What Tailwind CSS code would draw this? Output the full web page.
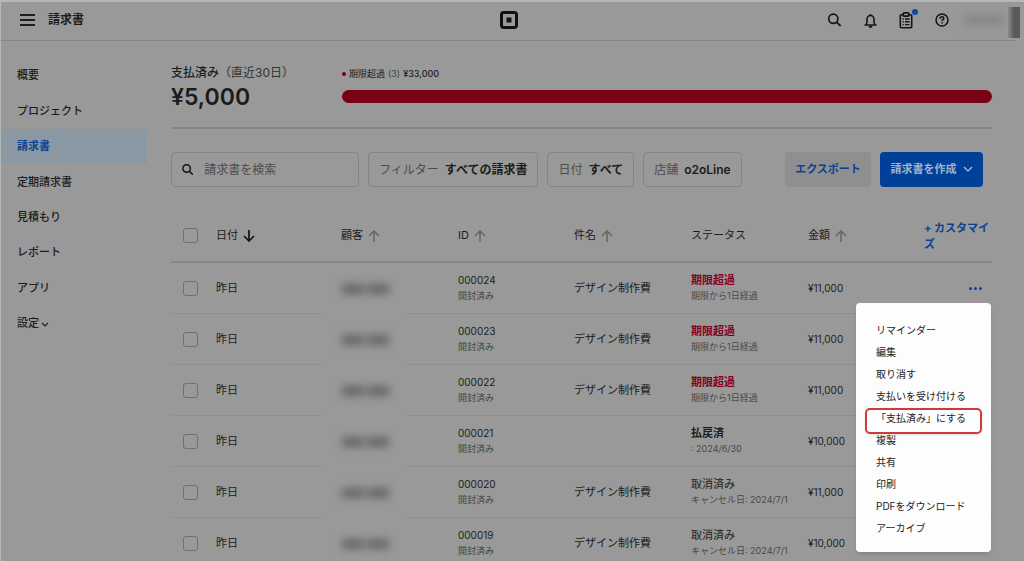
<!DOCTYPE html>
<html lang="ja">
<head>
<meta charset="utf-8">
<meta name="viewport" content="width=device-width, initial-scale=1">
<title>請求書</title>
<script src="https://cdn.jsdelivr.net/npm/@tailwindcss/browser@4"></script>
</head>
<body class="flex h-screen flex-col overflow-hidden border-t-2 border-l border-[#b4b8b7] bg-[#999999] font-['Inter','Noto_Sans_CJK_JP',sans-serif] text-[11px] text-[#1c1c1c]">

<header class="mr-2 grid h-[39px] shrink-0 grid-cols-[1fr_auto_1fr] items-center border-b border-[#858585] pb-[2px]">
  <div class="flex items-center gap-[13px] pl-[19px]">
    <button type="button" aria-label="メニュー">
      <svg class="block" width="15" height="12" viewBox="0 0 15 12" fill="none" stroke="#1f1f1f" stroke-width="1.8"><path d="M0 1h15M0 6h15M0 11h15"/></svg>
    </button>
    <h1 class="text-[12px] font-bold">請求書</h1>
  </div>
  <a href="#" aria-label="ホーム">
    <svg class="block" width="18" height="18" viewBox="0 0 18 18"><rect x="1.5" y="1.5" width="15" height="15" rx="2.2" fill="none" stroke="#111" stroke-width="3"/><rect x="6.5" y="6.5" width="5" height="5" rx=".6" fill="#111"/></svg>
  </a>
  <div class="flex items-center justify-end">
    <button type="button" aria-label="検索" class="mr-[22px]">
      <svg class="block" width="14" height="14" viewBox="0 0 14 14" fill="none" stroke="#151515" stroke-width="1.7"><circle cx="6.3" cy="5.8" r="4.6"/><path d="M9.6 9.100L13.500 12.800"/></svg>
    </button>
    <button type="button" aria-label="通知" class="mr-[22px]">
      <svg class="block" width="14" height="15" viewBox="0 0 14 15" fill="none" stroke="#151515" stroke-width="1.6"><path d="M1.500 12h12M3.100 11.700c.7-1 .9-2 .9-3.500V6a3.500 3.500 0 0 1 7 0v2.200c0 1.500.2 2.500.9 3.500M7.500 1v2"/><path d="M5.800 13.800h3.400" stroke-width="1.800"/></svg>
    </button>
    <button type="button" aria-label="タスク" class="relative mr-[22px]">
      <svg class="block" width="14" height="17" viewBox="0 0 14 17" fill="none" stroke="#151515" stroke-width="1.6"><path d="M4 2.800H2.300a1 1 0 0 0-1 1v11a1 1 0 0 0 1 1h9.400a1 1 0 0 0 1-1v-11a1 1 0 0 0-1-1H10"/><rect x="4.200" y=".9" width="5.600" height="3.200" rx=".8"/><path d="M3.500 7h1.300M6 7h4.600M3.500 9.800h1.300M6 9.800h4.600M3.500 12.600h1.300M6 12.600h4.600" stroke-width="1.400"/></svg>
      <span class="absolute -top-[3px] -right-[5px] size-[6px] rounded-full bg-[#0f4a9e]"></span>
    </button>
    <button type="button" aria-label="ヘルプ" class="mr-4">
      <svg class="block" width="14" height="14" viewBox="0 0 14 14" fill="none" stroke="#151515" stroke-width="1.500"><circle cx="7" cy="7" r="6"/><path d="M5.200 5.700c0-1.200.8-1.900 1.800-1.900s1.800.7 1.800 1.600c0 1.300-1.700 1.300-1.700 2.700"/><path d="M7.100 9.100v1.500"/></svg>
    </button>
    <span class="h-[10px] w-[38px] bg-[#858585] blur-[4px]"></span>
    <span class="-mr-1 ml-[5px] mt-1 h-[31px] w-[12px] bg-linear-to-r from-[#8c8c8c] to-[#5a5a5a] to-50%"></span>
  </div>
</header>

<div class="flex min-h-0 grow">
  <nav class="w-[146px] shrink-0 pt-[17px] font-medium">
    <ul class="grid h-[283px] grid-rows-8">
      <li><a href="#" class="flex h-full items-center pl-4">概要</a></li>
      <li><a href="#" class="flex h-full items-center pl-4">プロジェクト</a></li>
      <li><a href="#" aria-current="page" class="flex h-full items-center bg-[#8a98a4] pl-4 font-bold text-[#0a4390]">請求書</a></li>
      <li><a href="#" class="flex h-full items-center pl-4">定期請求書</a></li>
      <li><a href="#" class="flex h-full items-center pl-4">見積もり</a></li>
      <li><a href="#" class="flex h-full items-center pl-4">レポート</a></li>
      <li><a href="#" class="flex h-full items-center pl-4">アプリ</a></li>
      <li><a href="#" class="flex h-full items-center gap-[2px] pl-4">設定<svg class="mt-1" width="8" height="6" viewBox="0 0 8 6" fill="none" stroke="#1f1f1f" stroke-width="1.200"><path d="M1 1l3 3 3-3"/></svg></a></li>
    </ul>
  </nav>

  <main class="min-w-0 grow pr-8 pl-6">
    <section class="flex h-[88px] items-start border-b-2 border-[#868686] pt-6">
      <div class="w-[171px] shrink-0">
        <p class="text-[12px] leading-4"><span class="font-medium">支払済み</span><span class="text-[#333]">（直近30日）</span></p>
        <p class="text-[23px] leading-8 font-semibold">¥5,000</p>
      </div>
      <div class="grow">
        <p class="flex h-[17px] items-center text-[9px]"><span class="mr-[3px] size-1 rounded-full bg-[#7a0015]"></span>期限超過<span class="mx-[3px] text-[#444]">(3)</span><span class="font-medium">¥33,000</span></p>
        <div class="mt-2 h-[13px] rounded-full bg-[#7a0015]"></div>
      </div>
    </section>

    <section class="mt-[23px] flex h-[35px] gap-[9px] pr-[9px] text-[12px]">
      <label class="flex w-[188px] items-center gap-[11px] rounded-[4px] border border-[#858585] pl-[10px]">
        <svg width="13" height="13" viewBox="0 0 13 13" fill="none" stroke="#151515" stroke-width="1.700"><circle cx="5.300" cy="5.300" r="4.300"/><path d="M8.400 8.400L12.400 12.400"/></svg>
        <input type="text" aria-label="請求書を検索" placeholder="請求書を検索" class="w-full min-w-0 bg-transparent outline-none placeholder:text-[#4c4c4c]">
      </label>
      <button type="button" class="flex items-center gap-[6px] rounded-[4px] border border-[#858585] px-[10px] whitespace-nowrap"><span class="text-[#4c4c4c]">フィルター</span><span class="font-bold">すべての請求書</span></button>
      <button type="button" class="flex items-center gap-[6px] rounded-[4px] border border-[#858585] px-[10px] whitespace-nowrap"><span class="text-[#4c4c4c]">日付</span><span class="font-bold">すべて</span></button>
      <button type="button" class="flex items-center gap-[6px] rounded-[4px] border border-[#858585] px-[10px] whitespace-nowrap"><span class="text-[#4c4c4c]">店舗</span><span class="font-semibold">o2oLine</span></button>
      <button type="button" class="ml-auto w-[86px] rounded-[4px] bg-[#8f8f8f] text-[11px] font-bold text-[#0a4390]">エクスポート</button>
      <button type="button" class="flex w-[103px] items-center justify-center gap-[6px] rounded-[4px] bg-[#004099] text-[11px] font-bold whitespace-nowrap text-[#a3b3c8]">請求書を作成<svg width="10" height="7" viewBox="0 0 10 7" fill="none" stroke="#a3b3c8" stroke-width="1.500"><path d="M1 1l4 4 4-4"/></svg></button>
    </section>

    <table class="mt-[23px] w-full table-fixed border-separate border-spacing-0 text-left">
      <colgroup><col class="w-[45px]"><col class="w-[125px]"><col class="w-[117px]"><col class="w-[116px]"><col class="w-[117px]"><col class="w-[117px]"><col class="w-[116px]"><col></colgroup>
      <thead>
        <tr class="h-[53px] *:border-b-2 *:border-[#868686] *:p-0 *:font-normal">
          <th class="pl-3!"><input type="checkbox" aria-label="すべて選択" class="block size-[15px] appearance-none rounded-[3px] border border-[#707070]"></th>
          <th><button type="button" class="flex items-center gap-[5px]">日付<svg width="12" height="12" viewBox="0 0 12 12" fill="none" stroke="#151515" stroke-width="1.700"><path d="M6 0v11M1 6l5 5 5-5"/></svg></button></th>
          <th><button type="button" class="flex items-center gap-[5px]">顧客<svg width="12" height="12" viewBox="0 0 12 12" fill="none" stroke="#656565" stroke-width="1.500"><path d="M6 12V1M1 6l5-5 5 5"/></svg></button></th>
          <th><button type="button" class="flex items-center gap-[5px]">ID<svg width="12" height="12" viewBox="0 0 12 12" fill="none" stroke="#656565" stroke-width="1.500"><path d="M6 12V1M1 6l5-5 5 5"/></svg></button></th>
          <th><button type="button" class="flex items-center gap-[5px]">件名<svg width="12" height="12" viewBox="0 0 12 12" fill="none" stroke="#656565" stroke-width="1.500"><path d="M6 12V1M1 6l5-5 5 5"/></svg></button></th>
          <th>ステータス</th>
          <th><button type="button" class="flex items-center gap-[5px]">金額<svg width="12" height="12" viewBox="0 0 12 12" fill="none" stroke="#656565" stroke-width="1.500"><path d="M6 12V1M1 6l5-5 5 5"/></svg></button></th>
          <th><button type="button" class="block w-full text-left leading-4 font-bold text-[#0a4390]">+ カスタマイズ</button></th>
        </tr>
      </thead>
      <tbody id="rows"></tbody>
    </table>
  </main>
</div>

<template id="row">
  <tr class="h-[51px] *:border-b *:border-[#909090] *:p-0">
    <td class="pl-3!"><input type="checkbox" aria-label="選択" class="block size-[15px] appearance-none rounded-[3px] border border-[#707070]"></td>
    <td>昨日</td>
    <td class="relative"><div class="absolute top-0 -bottom-px -left-[18px] flex w-[84px] items-center justify-center bg-[#999999]"><span class="flex gap-[3px] blur-[4px]"><i class="h-[10px] w-[22px] bg-[#666666]"></i><i class="h-[10px] w-[22px] bg-[#666666]"></i></span></div></td>
    <td class="text-[10px] leading-4"><div data-f="id"></div><div class="text-[9px] text-[#444]">開封済み</div></td>
    <td data-f="subject"></td>
    <td class="leading-4"><div data-f="status"></div><div data-f="note" class="text-[9px] whitespace-nowrap text-[#484848]"></div></td>
    <td data-f="amount" class="text-[10px]"></td>
    <td class="relative" data-f="more"></td>
  </tr>
</template>

<template id="menu">
  <button type="button" aria-label="操作" class="ml-auto flex gap-[2px] pr-[10px]"><i class="size-[3px] rounded-full bg-[#0a4390]"></i><i class="size-[3px] rounded-full bg-[#0a4390]"></i><i class="size-[3px] rounded-full bg-[#0a4390]"></i></button>
  <div role="menu" class="absolute top-10 right-px z-10 flex w-[135px] flex-col rounded-[4px] bg-[#fdfdfd] pt-4 pb-[13px] text-[10px] shadow-md *:h-[22px] *:pl-5 *:text-left *:whitespace-nowrap">
    <button type="button" role="menuitem">リマインダー</button>
    <button type="button" role="menuitem">編集</button>
    <button type="button" role="menuitem">取り消す</button>
    <button type="button" role="menuitem">支払いを受け付ける</button>
    <button type="button" role="menuitem" class="relative">「支払済み」にする<span class="absolute top-[1px] right-[9px] left-[9px] h-[26px] rounded-[5px] border-2 border-[#d0383d] shadow"></span></button>
    <button type="button" role="menuitem">複製</button>
    <button type="button" role="menuitem">共有</button>
    <button type="button" role="menuitem">印刷</button>
    <button type="button" role="menuitem">PDFをダウンロード</button>
    <button type="button" role="menuitem">アーカイブ</button>
  </div>
</template>

<script>
const overdue = "font-bold text-[#85001c]", refunded = "font-bold", canceled = "font-medium text-[#333]";
const work = "デザイン制作費";
const invoices = [
  ["000024", work, "期限超過", overdue, "期限から1日経過", "¥11,000"],
  ["000023", work, "期限超過", overdue, "期限から1日経過", "¥11,000"],
  ["000022", work, "期限超過", overdue, "期限から1日経過", "¥11,000"],
  ["000021", "", "払戻済", refunded, ": 2024/6/30", "¥10,000"],
  ["000020", work, "取消済み", canceled, "キャンセル日: 2024/7/1", "¥11,000"],
  ["000019", work, "取消済み", canceled, "キャンセル日: 2024/7/1", "¥10,000"],
];
invoices.forEach(([id, subject, status, tone, note, amount], i) => {
  const row = document.getElementById("row").content.cloneNode(true);
  const cell = (name) => row.querySelector('[data-f="' + name + '"]');
  cell("id").textContent = id;
  cell("subject").textContent = subject;
  cell("status").textContent = status;
  cell("status").className = tone;
  cell("note").textContent = note;
  cell("amount").textContent = amount;
  row.querySelector("input").setAttribute("aria-label", id + "を選択");
  if (i === 0) cell("more").append(document.getElementById("menu").content.cloneNode(true));
  document.getElementById("rows").append(row);
});
</script>
</body>
</html>
